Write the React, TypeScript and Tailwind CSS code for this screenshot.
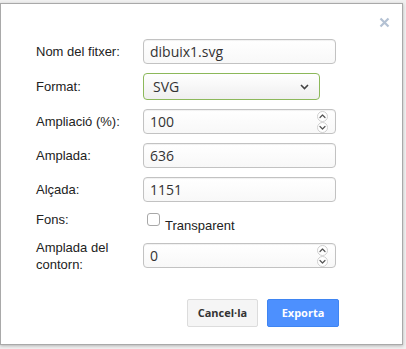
import React from 'react'

const labelCls = "w-[107px] shrink-0 text-[13px] leading-[17px] text-[#222] font-['Liberation_Sans',Arial,sans-serif]"
const inputCls =
  "h-[25px] w-[193px] rounded-[4px] border border-[#c2c2c2] bg-gradient-to-b from-white to-[#f8f8f8] pl-[6px] text-[14px] text-[#333] font-['Open_Sans',sans-serif] shadow-[inset_0_1px_1px_rgba(0,0,0,0.06)] flex items-center"

function Spinner() {
  return (
    <div className="absolute right-[7px] top-[1px] flex flex-col">
      {['M3 6.5 L5.5 4 L8 6.5', 'M3 4.5 L5.5 7 L8 4.5'].map((d, i) => (
        <svg key={i} width="11" height="11" viewBox="0 0 11 11">
          <circle cx="5.5" cy="5.5" r="5" fill="white" stroke="#cfcfcf" strokeWidth="1" />
          <path d={d} fill="none" stroke="#555" strokeWidth="1.2" strokeLinecap="round" strokeLinejoin="round" />
        </svg>
      ))}
    </div>
  )
}

function Field({ label, value, spin }: { label: string; value: string; spin?: boolean }) {
  return (
    <div className="flex items-center">
      <div className={labelCls}>{label}</div>
      <div className={`${inputCls} relative`}>
        {value}
        {spin && <Spinner />}
      </div>
    </div>
  )
}

export default function App() {
  return (
    <div className="w-[406px] h-[349px] bg-[#f0f0f0] pt-[3px] overflow-hidden">
      <div className="relative w-[403px] h-[342px] bg-white border border-[#a9a9a9] shadow-[0_1px_3px_rgba(0,0,0,0.25)] pl-[35px] pt-[35px]">
        {/* close */}
        <button className="absolute left-[378px] top-[13px] w-[11px] h-[11px]">
          <svg width="11" height="11" viewBox="0 0 11 11">
            <path d="M1.5 1.5 L9.5 9.5 M9.5 1.5 L1.5 9.5" stroke="#b3c1d3" strokeWidth="2.2" />
          </svg>
        </button>

        <div className="flex flex-col gap-[9px]">
          <Field label="Nom del fitxer:" value="dibuix1.svg" />

          <div className="flex items-center">
            <div className={labelCls}>Format:</div>
            <div className="h-[27px] w-[177px] rounded-[4px] border border-[#8cb85a] bg-gradient-to-b from-white to-[#efefef] pl-[9px] pr-[10px] flex items-center justify-between text-[14px] text-[#333] font-['Open_Sans',sans-serif]">
              <span>SVG</span>
              <svg width="9" height="6" viewBox="0 0 9 6">
                <path d="M1 1 L4.5 4.5 L8 1" fill="none" stroke="#444" strokeWidth="1.6" />
              </svg>
            </div>
          </div>

          <Field label="Ampliació (%):" value="100" spin />
          <Field label="Amplada:" value="636" />
          <Field label="Alçada:" value="1151" />

          <div className="flex h-[18px]">
            <div className={labelCls}>Fons:</div>
            <label className="flex items-start">
              <span className="mt-[2px] ml-[4px] w-[13px] h-[13px] rounded-[3px] border border-[#a8a8a8] bg-white" />
              <span className="ml-[5px] mt-[6px] text-[13px] leading-[17px] text-[#222] font-['Liberation_Sans',Arial,sans-serif]">
                Transparent
              </span>
            </label>
          </div>

          <div className="flex items-center h-[35px]">
            <div className={labelCls}>
              Amplada del
              <br />
              contorn:
            </div>
            <div className={`${inputCls} relative`}>
              0
              <Spinner />
            </div>
          </div>
        </div>

        <div className="w-[303px] flex justify-end gap-[9px] mt-[26px]">
          <button className="h-[28px] w-[71px] rounded-[2px] border border-[#dcdcdc] bg-[#f5f5f5] text-[11px] font-bold text-[#333] font-['Open_Sans',sans-serif]">
            Cancel·la
          </button>
          <button className="h-[28px] w-[72px] rounded-[2px] border border-[#3f85f2] bg-[#4d90fe] text-[11px] font-bold text-white font-['Open_Sans',sans-serif]">
            Exporta
          </button>
        </div>
      </div>
    </div>
  )
}
